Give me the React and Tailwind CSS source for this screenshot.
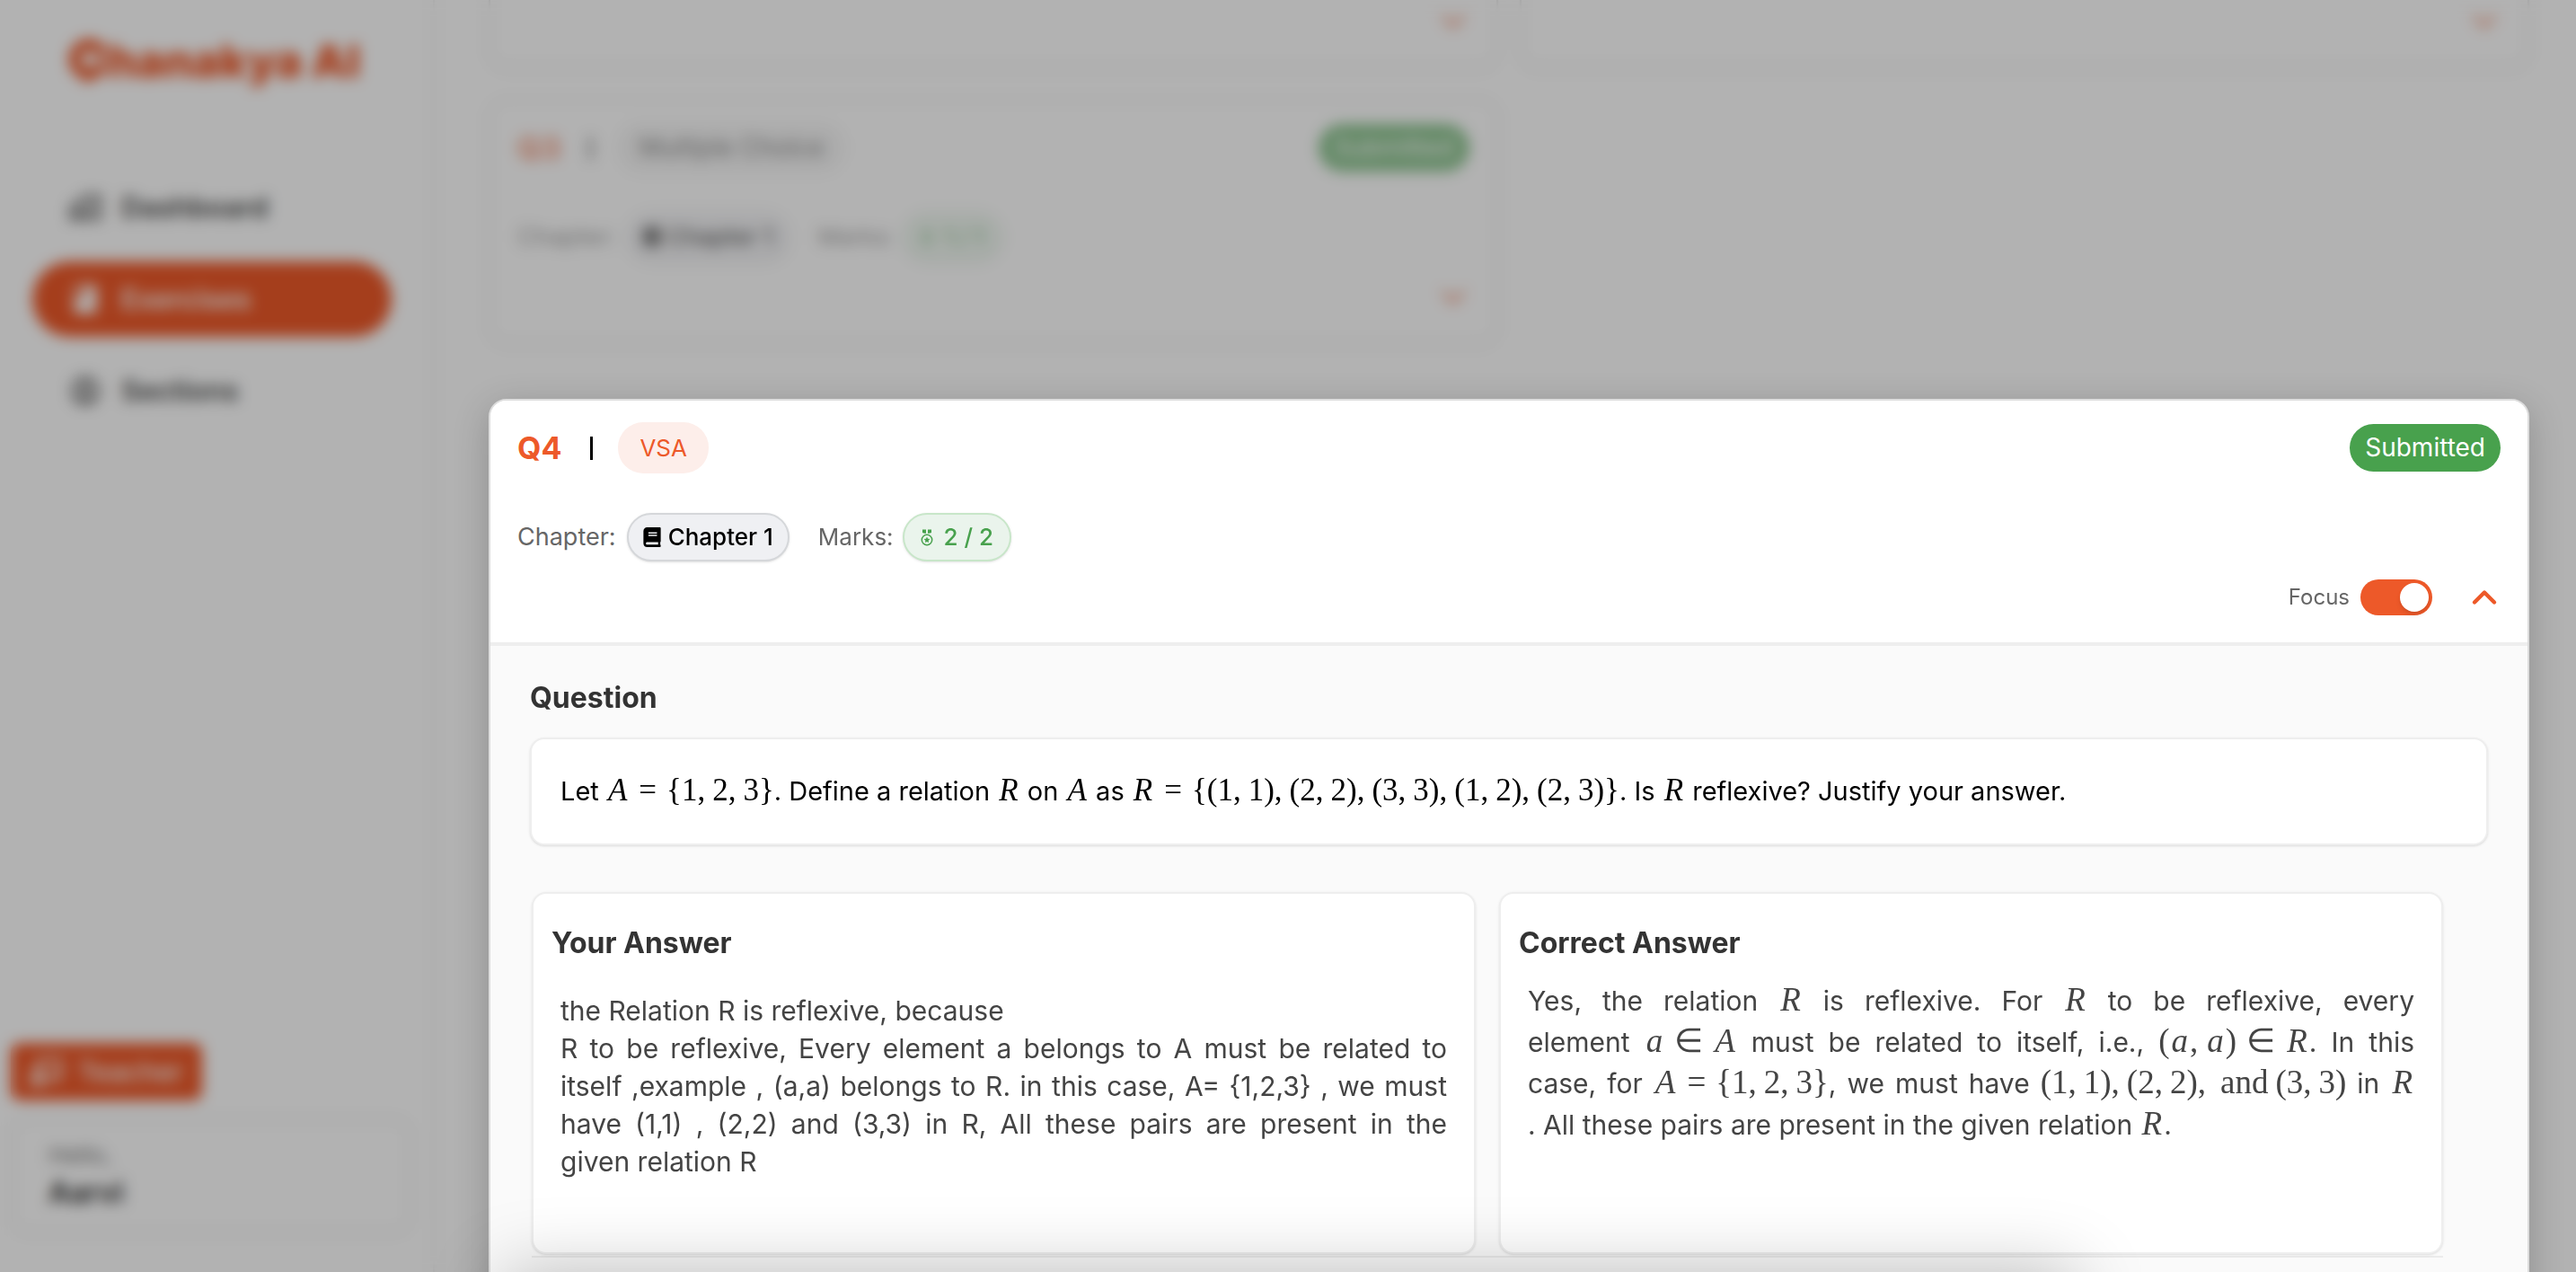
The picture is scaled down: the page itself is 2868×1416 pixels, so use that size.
import { FaBook, FaChalkboardTeacher } from "react-icons/fa";
import { MdOutlineMapsHomeWork, MdBook, MdOutlineAccountCircle } from "react-icons/md";
import { ChevronDown, ChevronUp } from "lucide-react";

function MathText({ children, large = false }) {
  return (
    <span
      className={`inline-block whitespace-pre font-['Liberation_Serif',serif] leading-none ${
        large ? "text-[37px]" : "text-[35px]"
      }`}
    >
      {children.split(/(and|[A-Za-z]|,|=|∈)/).map((part, i) => {
        if (part === "and") return <span key={i} className="mx-2">{part}</span>;
        if (/^[A-Za-z]$/.test(part)) return <i key={i} className="px-[2px]">{part}</i>;
        if (part === ",") return <span key={i} className="mr-2">,</span>;
        if (part === "=" || part === "∈") return <span key={i} className="mx-[11px]">{part}</span>;
        return part;
      })}
    </span>
  );
}

function Medal() {
  return (
    <svg viewBox="0 0 14 19" className="h-[19px] w-[14px]" fill="none" aria-hidden="true">
      <path d="M2 .5h4v4.2H4.4L2 4zM12 .5H8v4.2h1.6L12 4z" fill="currentColor" />
      <circle cx="7" cy="12" r="5.7" stroke="currentColor" strokeWidth="1.5" />
      <path d="M7 8.6l1 2.2 2.4.3-1.8 1.6.5 2.4L7 13.9l-2.1 1.2.5-2.4-1.8-1.6 2.4-.3z" fill="currentColor" />
    </svg>
  );
}

function CardHeader({ number, type, typeStyle, marks, children }) {
  return (
    <header className="px-[30px] pt-6 pb-[30px]">
      <div className="flex items-center justify-between">
        <div className="flex items-center">
          <h2 className="text-[34px] leading-10 font-bold text-[#ed5929]">{number}</h2>
          <span className="mr-7 ml-8 h-[26px] w-[3px] bg-black" />
          <span className={`rounded-[28px] px-6 py-2 leading-[41px] ${typeStyle}`}>{type}</span>
        </div>
        <span className="rounded-full bg-[#48a14d] px-[17px] py-1.5 text-[28px] leading-[41px] text-white">Submitted</span>
      </div>
      <div className="mt-11 flex items-center text-[26px] leading-[38px] text-[#666]">
        <span className="mr-3 text-[27px]">Chapter:</span>
        <span className="mr-8 flex items-center gap-2 rounded-[28px] border-2 border-[#d5d7da] bg-[#eff0f3] px-4 py-1.5 font-medium text-black shadow-sm">
          <FaBook className="h-[22px] w-5" />
          Chapter 1
        </span>
        <span className="mr-2.5">Marks:</span>
        <span className="flex items-center gap-3 rounded-[28px] border-2 border-[#c8e6c9] bg-[#eaf4ec] px-[18px] py-1.5 font-medium text-[#48a14d] shadow-sm">
          <Medal />
          {marks}
        </span>
      </div>
      <div className="mt-5 flex h-10 items-center justify-end">{children}</div>
    </header>
  );
}

function Expand() {
  return (
    <button type="button" aria-label="Expand question" className="-mr-1 text-[#ed5929]">
      <ChevronDown size={44} strokeWidth={2.4} />
    </button>
  );
}

function ClosedFooter() {
  return (
    <section className="rounded-b-[20px] border-2 border-t-0 border-[#ddd] bg-white px-[30px] pt-1 pb-[30px] opacity-60 shadow-sm">
      <div className="flex h-10 items-center justify-end">
        <Expand />
      </div>
    </section>
  );
}

function NavItem({ icon: Icon, label, active = false }) {
  return (
    <a
      href="#"
      className={`flex h-[84px] items-center gap-[21px] rounded-full px-10 text-[31px] font-semibold ${
        active ? "bg-[#ed5929] text-white" : "text-[#444]"
      }`}
    >
      <Icon className="size-[38px]" />
      {label}
    </a>
  );
}

function Sidebar() {
  return (
    <aside className="flex w-[484px] shrink-0 flex-col border-r-2 border-[#eee] bg-white">
      <a href="#" className="flex items-center px-[76px] pt-[42px] text-[50px] leading-[52px] font-black text-[#ed5929]">
        <svg viewBox="0 0 44 50" className="h-[50px] w-11" aria-hidden="true">
          <path d="M37 15A16 16 0 1 0 37 31" fill="none" stroke="currentColor" strokeWidth="13" />
          <path d="M37 15L37 31" fill="none" stroke="currentColor" strokeWidth="6" />
          <path d="M7 35h28L21 50z" fill="currentColor" />
        </svg>
        <span className="whitespace-nowrap">hanakya AI</span>
      </a>
      <nav className="mt-[95px] flex flex-col gap-[18px] pr-[46px] pl-9">
        <NavItem icon={MdOutlineMapsHomeWork} label="Dashboard" />
        <NavItem icon={MdBook} label="Exercises" active />
        <NavItem icon={MdOutlineAccountCircle} label="Sections" />
      </nav>
      <div className="mt-auto flex flex-col items-start gap-5 pr-6 pb-[43px] pl-3">
        <button type="button" className="flex items-center gap-[18px] rounded-[10px] bg-[#ed5929] px-[21px] py-3 text-[30px] leading-10 font-medium text-white">
          <FaChalkboardTeacher className="size-9" />
          Teacher
        </button>
        <div className="w-full rounded-[20px] border-2 border-[#e2e2e2] px-10 py-5">
          <p className="text-[26px] leading-[38px] text-[#777]">Hello,</p>
          <p className="text-[32px] leading-[46px] font-bold text-[#333]">Aarvi</p>
        </div>
      </div>
    </aside>
  );
}

function Answer({ title, children }) {
  return (
    <article className="rounded-2xl border-2 border-[#eee] bg-white px-5 pt-[35px] pb-20 shadow-sm">
      <h3 className="text-[32px] leading-10 font-bold text-[#333]">{title}</h3>
      <div className="px-[10px] text-[30px] text-[#444]">{children}</div>
    </article>
  );
}

function Line({ children }) {
  return <span className="block text-justify [text-align-last:justify]">{children}</span>;
}

export default function App() {
  return (
    <div className="flex h-screen overflow-hidden bg-white font-['Inter',sans-serif]">
      <Sidebar />
      <main className="min-w-0 flex-1 pr-[52px] pl-[60px]">
        <div className="grid grid-cols-2 gap-x-6 gap-y-[34px]">
          <ClosedFooter />
          <ClosedFooter />
          <section className="rounded-[20px] border-2 border-[#ddd] bg-white opacity-60 shadow-sm">
            <CardHeader number="Q3" type="Multiple Choice" typeStyle="bg-[#f1f1f1] text-[28px] text-[#444]" marks="1 / 1">
              <Expand />
            </CardHeader>
          </section>
        </div>

        <div className="fixed inset-0 z-10 bg-black/30 backdrop-blur-[8px]" />

        <section className="relative z-20 mt-[61px] overflow-hidden rounded-[20px] border-2 border-[#ddd] bg-[#fafafa] shadow-[0_10px_40px_rgba(0,0,0,0.2)]">
          <div className="border-b-4 border-[#eee] bg-white">
            <CardHeader number="Q4" type="VSA" typeStyle="bg-[#fdeeea] text-[26px] text-[#ed5929]" marks="2 / 2">
              <label className="flex items-center gap-3 text-[24px] text-[#666]">
                Focus
                <input
                  type="checkbox"
                  role="switch"
                  defaultChecked
                  className="h-10 w-20 appearance-none rounded-full bg-gray-300 p-1 before:block before:size-8 before:rounded-full before:bg-white before:shadow-md checked:bg-[#ed5929] checked:before:ml-10"
                />
              </label>
              <button type="button" aria-label="Collapse question" className="-mr-1 ml-9 text-[#ed5929]">
                <ChevronUp size={44} strokeWidth={2.4} />
              </button>
            </CardHeader>
          </div>
          <div className="px-11 pt-[38px] pb-20">
            <h3 className="text-[32px] leading-10 font-bold text-[#333]">Question</h3>
            <p className="mt-6 rounded-2xl border-2 border-[#eee] bg-white px-8 py-9 text-[29px] leading-[44px] text-black shadow-sm">
              Let <MathText>{"A={1,2,3}"}</MathText>. Define a relation <MathText>R</MathText> on <MathText>A</MathText> as{" "}
              <MathText>{"R={(1,1),(2,2),(3,3),(1,2),(2,3)}"}</MathText>. Is <MathText>R</MathText> reflexive? Justify your answer.
            </p>
            <div className="mt-[52px] mr-[50px] ml-0.5">
              <div className="grid grid-cols-2 gap-[26px]">
                <Answer title="Your Answer">
                  <p className="mt-[34px] leading-[42px]">
                    <span className="block">the Relation R is reflexive, because</span>
                    <Line>R to be reflexive, Every element a belongs to A must be related to</Line>
                    <Line>{"itself ,example , (a,a) belongs to R. in this case, A= {1,2,3} , we must"}</Line>
                    <Line>have (1,1) , (2,2) and (3,3) in R, All these pairs are present in the</Line>
                    <span className="block">given relation R</span>
                  </p>
                </Answer>
                <Answer title="Correct Answer">
                  <p className="mt-[21px] leading-[46px]">
                    <Line>
                      Yes, the relation <MathText large>R</MathText> is reflexive. For <MathText large>R</MathText> to be reflexive, every
                    </Line>
                    <Line>
                      element <MathText large>a∈A</MathText> must be related to itself, i.e., <MathText large>(a,a)∈R</MathText>. In this
                    </Line>
                    <Line>
                      case, for <MathText large>{"A={1,2,3}"}</MathText>, we must have{" "}
                      <MathText large>{"(1,1),(2,2),and(3,3)"}</MathText> in <MathText large>R</MathText>
                    </Line>
                    <span className="block">
                      . All these pairs are present in the given relation <MathText large>R</MathText>.
                    </span>
                  </p>
                </Answer>
              </div>
              <div className="mt-0.5 h-12 border-t-2 border-[#ebebeb]" />
            </div>
          </div>
        </section>
      </main>
      <div className="fixed top-full right-[19.5%] left-[19.5%] z-30 h-40 shadow-[0_0_80px_rgba(0,0,0,0.25)]" />
    </div>
  );
}
